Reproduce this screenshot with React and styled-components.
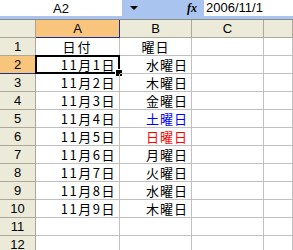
import React from 'react'
import styled, { createGlobalStyle } from 'styled-components'

const GlobalStyle = createGlobalStyle`
  * { box-sizing: border-box; }
  body {
    margin: 0;
    background: #ffffff;
    font-family: "Noto Sans CJK JP", sans-serif;
    overflow: hidden;
  }
`

const Window = styled.div`
  width: 293px;
  height: 250px;
  overflow: hidden;
  display: flex;
  flex-direction: column;
`

const FormulaBar = styled.div`
  height: 19px;
  display: flex;
  align-items: flex-start;
  background: #a9c5ef;
  flex-shrink: 0;
`

const NameBox = styled.div`
  width: 122px;
  height: 16px;
  background: #fff;
  display: flex;
  align-items: center;
  justify-content: center;
  font-family: "Liberation Sans", sans-serif;
  font-size: 13px;
  color: #000;
`

const DropButton = styled.div`
  width: 24px;
  height: 16px;
  display: flex;
  align-items: center;
  justify-content: center;
  &::after {
    content: '';
    border-left: 4px solid transparent;
    border-right: 4px solid transparent;
    border-top: 4px solid #000;
  }
`

const FxLabel = styled.div`
  margin-left: 41px;
  width: 17px;
  height: 16px;
  font-family: "Liberation Serif", serif;
  font-style: italic;
  font-weight: bold;
  font-size: 12px;
  line-height: 16px;
  color: #000;
`

const FormulaInput = styled.div`
  flex: 1;
  height: 16px;
  background: #fff;
  padding-left: 2px;
  font-family: "Liberation Sans", sans-serif;
  font-size: 13px;
  line-height: 16px;
  color: #000;
`

const Sheet = styled.div`
  display: grid;
  grid-template-columns: 36px 84px 72px 72px 1fr;
  grid-auto-rows: 18px;
  border-top: 1px solid #8c8c8c;
`

const Head = styled.div`
  background: ${p => (p.$active ? '#f9c47c' : '#ecead9')};
  border-right: 1px solid ${p => (p.$active && p.$col ? '#1c2f8c' : '#aca899')};
  border-bottom: 1px solid ${p => (p.$active ? '#1c2f8c' : '#aca899')};
  display: flex;
  align-items: center;
  justify-content: center;
  font-family: "Liberation Sans", sans-serif;
  font-size: 13px;
  color: #000;
`

const Cell = styled.div`
  position: relative;
  border-right: 1px solid #c0c0c0;
  border-bottom: 1px solid #c0c0c0;
  padding: 0 3px;
  font-size: 13px;
  line-height: 17px;
  letter-spacing: ${p => p.$spacing || '1px'};
  white-space: nowrap;
  text-align: ${p => p.$align || 'left'};
  color: ${p => p.$color || '#000'};
`

const Selection = styled.div`
  position: absolute;
  left: -1px;
  top: -1px;
  right: -1px;
  bottom: -1px;
  border: 2px solid #000;
  pointer-events: none;
`

const FillHandle = styled.div`
  position: absolute;
  right: -4px;
  bottom: -4px;
  width: 6px;
  height: 6px;
  background: #000;
  outline: 1px solid #fff;
`

const days = [
  ['11月1日', '水曜日'],
  ['11月2日', '木曜日'],
  ['11月3日', '金曜日'],
  ['11月4日', '土曜日', '#0000ff'],
  ['11月5日', '日曜日', '#ff0000'],
  ['11月6日', '月曜日'],
  ['11月7日', '火曜日'],
  ['11月8日', '水曜日'],
  ['11月9日', '木曜日'],
]

export default function App() {
  return (
    <Window>
      <GlobalStyle />
      <FormulaBar>
        <NameBox>A2</NameBox>
        <DropButton />
        <FxLabel>fx</FxLabel>
        <FormulaInput>2006/11/1</FormulaInput>
      </FormulaBar>
      <Sheet>
        <Head />
        <Head $active $col>A</Head>
        <Head>B</Head>
        <Head>C</Head>
        <Head />

        <Head>1</Head>
        <Cell $align="center" $spacing="2px">日付</Cell>
        <Cell $align="center">曜日</Cell>
        <Cell />
        <Cell />

        {days.map(([date, day, color], i) => (
          <React.Fragment key={i}>
            <Head $active={i === 0}>{i + 2}</Head>
            <Cell $align="right" $spacing="1.5px">
              {date}
              {i === 0 && (
                <Selection>
                  <FillHandle />
                </Selection>
              )}
            </Cell>
            <Cell $align="right" $color={color}>{day}</Cell>
            <Cell />
            <Cell />
          </React.Fragment>
        ))}

        {[11, 12].map(n => (
          <React.Fragment key={n}>
            <Head>{n}</Head>
            <Cell />
            <Cell />
            <Cell />
            <Cell />
          </React.Fragment>
        ))}
      </Sheet>
    </Window>
  )
}
